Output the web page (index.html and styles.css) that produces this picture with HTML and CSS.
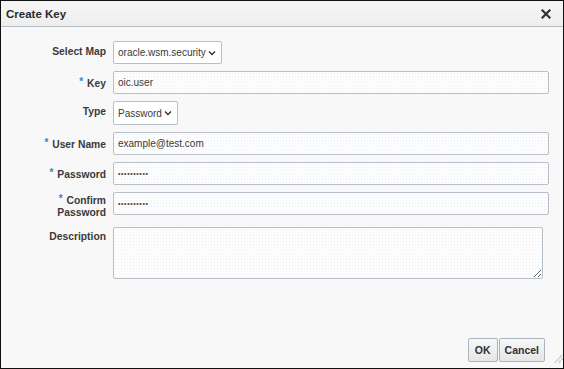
FILE: index.html
```html
<!DOCTYPE html>
<html lang="en">
<head>
  <meta charset="UTF-8">
  <meta name="viewport" content="width=device-width, initial-scale=1.0">
  <title>Create Key</title>
  <link rel="stylesheet" href="styles.css">
</head>
<body>
  <div class="dialog">
    <div class="dialog-header">
      <span class="dialog-title">Create Key</span>
      <button class="close-btn" aria-label="Close">
        <svg width="10" height="10" viewBox="0 0 10 10"><path d="M1.5 1.5 L8.5 8.5 M8.5 1.5 L1.5 8.5" stroke="#333" stroke-width="2.2" stroke-linecap="square"/></svg>
      </button>
    </div>

    <div class="dialog-body">
      <form class="key-form">
        <label class="lbl">Select Map</label>
        <div class="field">
          <div class="select select-map">
            <span>oracle.wsm.security</span>
            <svg width="8" height="6" viewBox="0 0 8 6"><path d="M1 1.5 L4 4.5 L7 1.5" fill="none" stroke="#333" stroke-width="1.4"/></svg>
          </div>
        </div>

        <label class="lbl"><span class="req">*</span> Key</label>
        <div class="field"><input type="text" value="oic.user"></div>

        <label class="lbl">Type</label>
        <div class="field">
          <div class="select select-type">
            <span>Password</span>
            <svg width="8" height="6" viewBox="0 0 8 6"><path d="M1 1.5 L4 4.5 L7 1.5" fill="none" stroke="#333" stroke-width="1.4"/></svg>
          </div>
        </div>

        <label class="lbl"><span class="req">*</span> User Name</label>
        <div class="field"><input type="text" value="example@test.com"></div>

        <label class="lbl"><span class="req">*</span> Password</label>
        <div class="field"><input class="pw" type="password" value="xxxxxxxxxx"></div>

        <label class="lbl lbl-two"><span><span class="req">*</span> Confirm</span><span>Password</span></label>
        <div class="field"><input class="pw" type="password" value="xxxxxxxxxx"></div>

        <label class="lbl">Description</label>
        <div class="field"><textarea class="desc"></textarea></div>
      </form>
    </div>

    <div class="dialog-footer">
      <button class="btn">OK</button>
      <button class="btn">Cancel</button>
      <span class="grip"></span>
    </div>
  </div>
</body>
</html>
```

FILE: styles.css
```css
* { box-sizing: border-box; }
html, body { margin: 0; padding: 0; }
body { font-family: "Liberation Sans", Arial, sans-serif; color: #333; }

.dialog {
  width: 564px; height: 369px;
  border: 1px solid #111;
  background: #f8f8f8;
  display: flex; flex-direction: column;
}

.dialog-header {
  height: 26px;
  display: flex; align-items: center; justify-content: space-between;
  padding: 0 12px 0 5px;
  background: linear-gradient(#f6f6f6, #eeeeee);
  border-bottom: 1px solid #b4bec6;
}
.dialog-title { font-size: 11.5px; font-weight: bold; color: #2b2b2b; padding-top: 1px; }
.close-btn { border: none; background: none; padding: 0; display: flex; cursor: pointer; }

.dialog-body { flex: 1; padding: 14px 14px 0 0; }

.key-form {
  display: grid;
  grid-template-columns: 105px 1fr;
  column-gap: 7px;
  row-gap: 7px;
  align-items: start;
}

.lbl {
  font-size: 10.3px; font-weight: bold; color: #3a3a3a;
  text-align: right;
  padding-top: 5px;
  line-height: 12px;
}
.lbl-two { display: flex; flex-direction: column; align-items: flex-end; padding-top: 1px; }
.req { color: #3d7cc4; font-size: 10px; vertical-align: 2px; margin-right: 1px; }

.field { display: flex; }

input, .select, textarea {
  height: 23px;
  border: 1px solid #b7c0c8;
  border-radius: 2px;
  font-family: "Liberation Sans", Arial, sans-serif;
  font-size: 10px;
  color: #3a3a3a;
  padding: 0 4px;
  background-color: #fdfdfd;
  background-image: radial-gradient(#eef1f3 0.6px, transparent 0.8px);
  background-size: 3px 3px;
}
input { width: 100%; outline: none; }
input.pw { font-size: 7px; letter-spacing: 0.6px; color: #444; }

.select {
  display: flex; align-items: center; justify-content: space-between;
  background: #fff;
  padding: 0 5px 0 4px;
}
.select-map { width: 109px; }
.select-type { width: 65px; height: 24px; }

textarea.desc { width: 430px; height: 52px; resize: both; margin-top: 1px; }

.dialog-footer {
  display: flex; justify-content: flex-end; align-items: flex-end;
  padding: 0 0 5px 0;
}
.btn {
  height: 24px;
  margin-bottom: 1px;
  padding: 0 5px;
  border: 1px solid #a9b4be;
  border-radius: 2px;
  background: linear-gradient(#f7f7f7, #e6e6e6);
  font-family: "Liberation Sans", Arial, sans-serif;
  font-size: 10.5px; font-weight: bold; color: #2f2f2f;
}
.btn:first-child { padding: 0 6px; }
.btn + .btn { margin-left: 1px; }
.grip {
  width: 10px; height: 10px; margin-left: 8px;
  background: linear-gradient(135deg, transparent 50%, #d6d6d6 50%, #d6d6d6 60%, transparent 60%, transparent 70%, #d6d6d6 70%, #d6d6d6 80%, transparent 80%);
}
```
